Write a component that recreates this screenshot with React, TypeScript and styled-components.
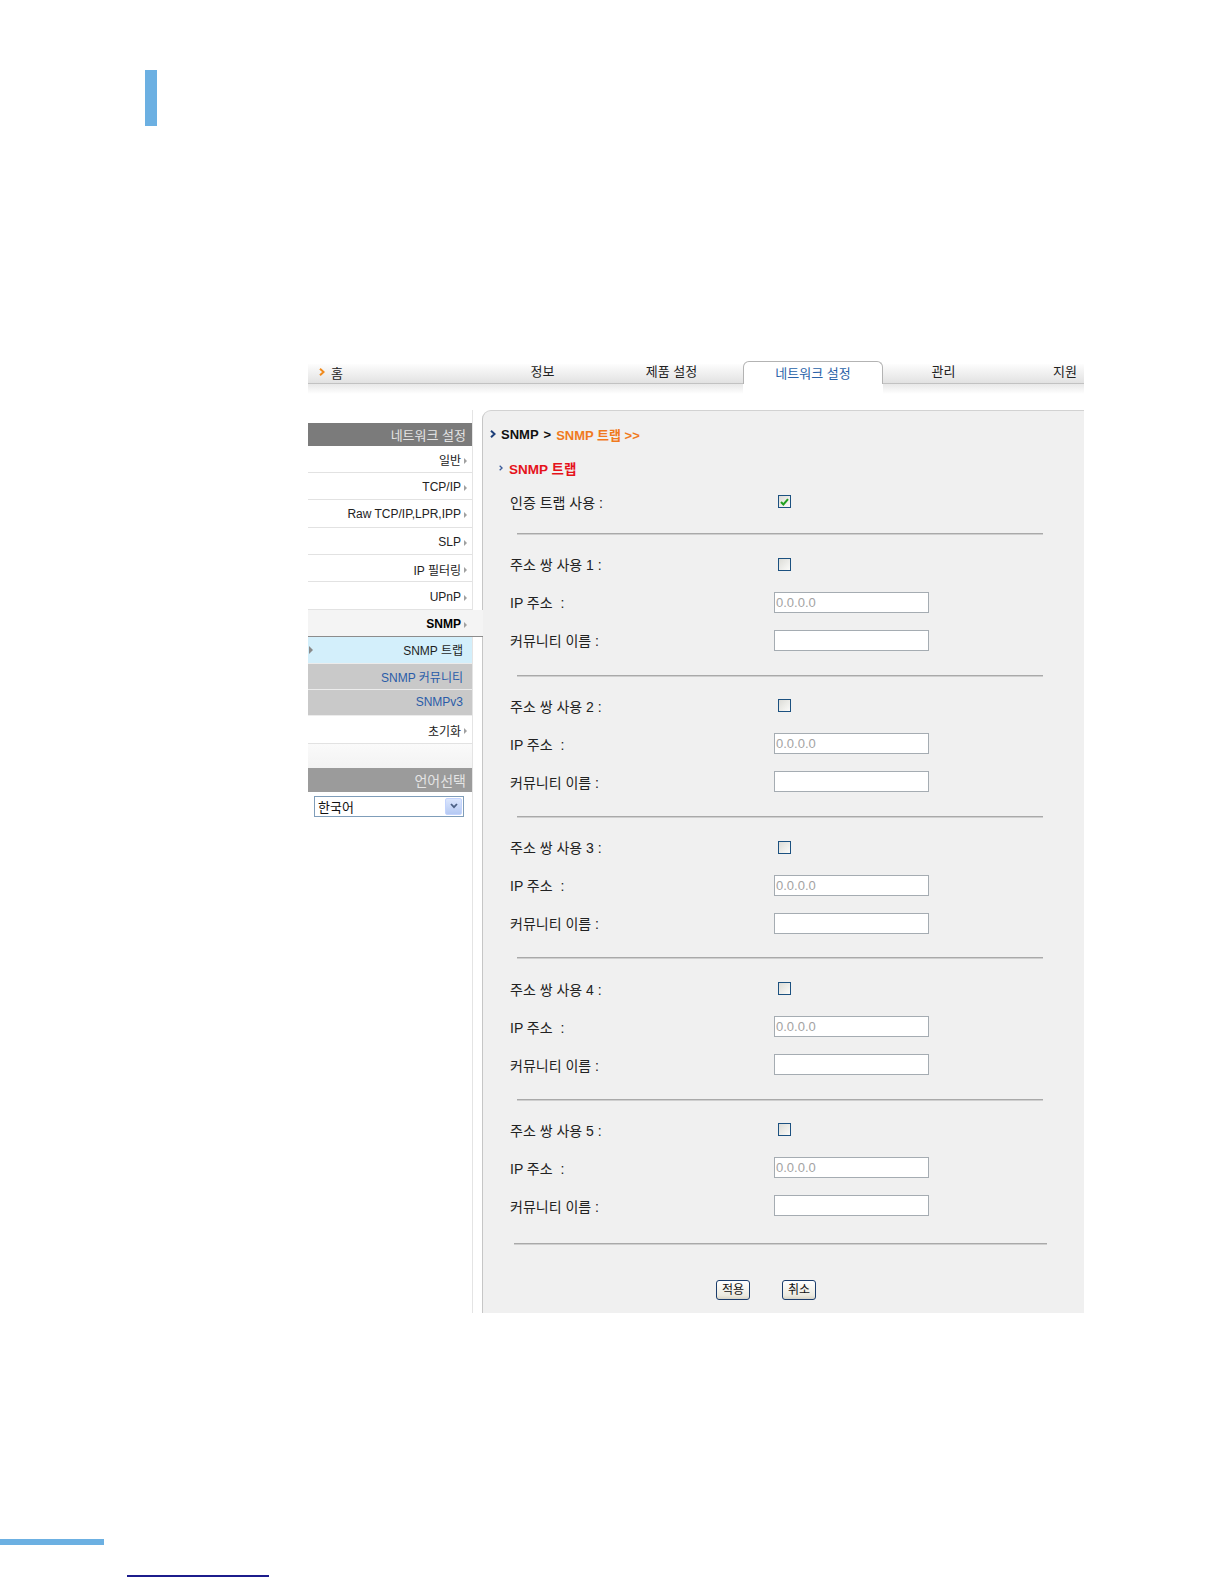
import React from "react";
import styled, { createGlobalStyle } from "styled-components";

const Global = createGlobalStyle`
  html, body { margin: 0; padding: 0; background: #fff; }
  body { font-family: "Liberation Sans", "Noto Sans CJK KR", sans-serif; color: #222; }
  * { box-sizing: border-box; }
`;

const Page = styled.div`
  width: 1224px;
  height: 1584px;
  display: flex;
  flex-direction: column;
  overflow: hidden;
  background: #fff;
`;

const Marker = styled.div`
  margin: 70px 0 0 145px;
  width: 12px;
  height: 56px;
  background: #6cb0e2;
`;

const Screen = styled.div`
  margin: 235px 0 0 308px;
  width: 776px;
  height: 952px;
  display: flex;
  flex-direction: column;
  overflow: hidden;
`;

const NavBar = styled.div`
  height: 33px;
  display: flex;
  align-items: flex-start;
  background: linear-gradient(
    to bottom,
    #fff 0px,
    #fff 3px,
    #fdfdfd 3px,
    #e2e2e2 22px,
    #c2c2c2 22px,
    #c2c2c2 23px,
    #e8e8e8 23px,
    #fff 33px
  );
  font-size: 13px;
  color: #222;
`;

const HomeLink = styled.div`
  width: 170px;
  height: 23px;
  padding: 0 0 1px 11px;
  display: flex;
  align-items: center;
  gap: 6px;
`;

const Tab = styled.div<{ $w: number; $end?: boolean }>`
  width: ${(p) => p.$w}px;
  height: 23px;
  padding-bottom: 4px;
  display: flex;
  align-items: center;
  justify-content: ${(p) => (p.$end ? "flex-end" : "center")};
  padding-right: ${(p) => (p.$end ? "7px" : "0")};
`;

const ActiveTab = styled.div`
  position: relative;
  margin-left: 7px;
  width: 140px;
  height: 23px;
  padding-bottom: 2px;
  display: flex;
  align-items: center;
  justify-content: center;
  background: #fff;
  border: 1px solid #b3b3b3;
  border-bottom: none;
  border-radius: 6px 6px 0 0;
  color: #2a62a8;
  &::after {
    content: "";
    position: absolute;
    left: -1px;
    right: -1px;
    top: 22px;
    height: 11px;
    background: #fff;
  }
`;

const Body = styled.div`
  margin-top: 16px;
  flex: 1;
  display: flex;
`;

const Sidebar = styled.div`
  width: 174px;
  padding-top: 13px;
  display: flex;
  flex-direction: column;
  background: linear-gradient(
    to right,
    transparent 164px,
    #e4e4e4 164px,
    #e4e4e4 165px,
    transparent 165px
  );
`;

const SideHeader = styled.div<{ $lang?: boolean }>`
  width: 164px;
  height: ${(p) => (p.$lang ? 24 : 22.5)}px;
  background: ${(p) => (p.$lang ? "#9b9b9b" : "#7b7b7b")};
  color: #e4e4e4;
  font-size: ${(p) => (p.$lang ? 14 : 13)}px;
  display: flex;
  align-items: center;
  justify-content: flex-end;
  padding-right: 6px;
`;

const SideItem = styled.div<{ $active?: boolean }>`
  width: ${(p) => (p.$active ? 175 : 164)}px;
  height: 27.4px;
  position: ${(p) => (p.$active ? "relative" : "static")};
  z-index: ${(p) => (p.$active ? 2 : 0)};
  display: flex;
  align-items: center;
  justify-content: flex-end;
  padding-top: 2px;
  padding-right: ${(p) => (p.$active ? 16 : 5)}px;
  font-size: 12px;
  font-weight: ${(p) => (p.$active ? 700 : 400)};
  color: ${(p) => (p.$active ? "#000" : "#222")};
  background: ${(p) => (p.$active ? "#f4f4f4" : "#fff")};
  border-bottom: 1px solid ${(p) => (p.$active ? "#8c8c8c" : "#e2e2e2")};
`;

const ItemArrow = styled.span`
  width: 0;
  height: 0;
  margin-left: 3px;
  margin-top: 2px;
  border-left: 3px solid #a0a0a0;
  border-top: 3px solid transparent;
  border-bottom: 3px solid transparent;
`;

const SubItem = styled.div<{ $current?: boolean }>`
  width: 164px;
  height: 26.3px;
  display: flex;
  align-items: center;
  justify-content: space-between;
  padding: 0 9px 0 1px;
  font-size: 12px;
  color: ${(p) => (p.$current ? "#1e1e1e" : "#2a5ca8")};
  background: ${(p) => (p.$current ? "#d3effb" : "#c9c9c9")};
  border-bottom: 1px solid #ececec;
`;

const SubMark = styled.span<{ $show?: boolean }>`
  width: 0;
  height: 0;
  border-left: 4px solid ${(p) => (p.$show ? "#8a8a8a" : "transparent")};
  border-top: 4px solid transparent;
  border-bottom: 4px solid transparent;
`;

const SideGap = styled.div`
  width: 164px;
  height: 24px;
  background: linear-gradient(to bottom, #fafafa, #f3f3f3);
`;

const LangWrap = styled.div`
  width: 164px;
  padding: 4px 0 0 6px;
`;

const LangSelect = styled.div`
  width: 150px;
  height: 21px;
  border: 1px solid #7f9db9;
  background: #fff;
  display: flex;
  align-items: stretch;
  font-size: 13px;
  color: #111;
`;

const LangValue = styled.div`
  flex: 1;
  display: flex;
  align-items: center;
  padding-left: 3px;
`;

const LangButton = styled.div`
  width: 17px;
  margin: 1px;
  border-radius: 2px;
  background: linear-gradient(to bottom, #dbe6fd, #b5c9f3);
  border: 1px solid #c3d3fd;
  display: flex;
  align-items: center;
  justify-content: center;
`;

const Panel = styled.div`
  flex: 1;
  background: #f0f0f0;
  border-top: 1px solid #d2d2d2;
  border-left: 1px solid #c6c6c6;
  border-top-left-radius: 9px;
  display: flex;
  flex-direction: column;
  align-items: flex-start;
`;

const Breadcrumb = styled.div`
  margin: 15.3px 0 0 7px;
  height: 16px;
  display: flex;
  align-items: center;
  gap: 5px;
  font-size: 13px;
  font-weight: 700;
  color: #111;
`;

const Orange = styled.span`
  color: #f07a1e;
`;

const SectionTitle = styled.div`
  margin: 17.4px 0 0 16px;
  height: 16px;
  display: flex;
  align-items: center;
  gap: 6px;
  font-size: 13.5px;
  font-weight: 700;
  color: #e5131b;
`;

const Form = styled.div`
  margin-left: 27px;
  display: flex;
  flex-direction: column;
`;

const Row = styled.div<{ $first?: boolean }>`
  display: grid;
  grid-template-columns: 264px 160px;
  height: 38px;
  align-items: center;
  margin-top: ${(p) => (p.$first ? 7.3 : 0)}px;
  font-size: 14px;
  color: #222;
`;

const Divider = styled.div<{ $last?: boolean }>`
  margin-top: ${(p) => (p.$last ? 18 : 12.3)}px;
  margin-left: ${(p) => (p.$last ? 4 : 7)}px;
  width: ${(p) => (p.$last ? 533 : 526)}px;
  height: 2px;
  border-top: 1px solid #a9a9a9;
  border-bottom: 1px solid #cfcfcf;
`;

const GroupDivider = styled(Divider)`
  margin-top: 15.2px;
`;

const Group = styled.div`
  margin-top: 10.2px;
  display: flex;
  flex-direction: column;
`;

const Check = styled.span`
  margin-left: 4px;
  width: 13px;
  height: 13px;
  border: 1px solid #1c5180;
  background: linear-gradient(135deg, #dcdcd7, #fbfbf9);
  display: flex;
  align-items: center;
  justify-content: center;
`;

const TextField = styled.input`
  width: 155px;
  height: 21px;
  border: 1px solid #a5acb2;
  background: #fff;
  font-family: "Liberation Sans", "Noto Sans CJK KR", sans-serif;
  font-size: 13px;
  color: #a3a3a3;
  padding: 0 1px;
  outline: none;
`;

const Buttons = styled.div`
  margin: 34.6px 0 0 206px;
  display: flex;
  gap: 32px;
`;

const XpButton = styled.button`
  width: 34px;
  height: 20px;
  padding: 0;
  border: 1px solid #1b3d6c;
  border-radius: 3px;
  background: linear-gradient(to bottom, #ffffff, #eceae0 80%, #d8d5c8);
  font-family: "Liberation Sans", "Noto Sans CJK KR", sans-serif;
  font-size: 12px;
  color: #111;
  line-height: 16px;
`;

const Footer = styled.div`
  display: flex;
  flex-direction: column;
  margin-top: 226px;
`;

const FooterBar = styled.div`
  width: 104px;
  height: 6px;
  background: #6cb0e2;
`;

const FooterLine = styled.div`
  margin: 30px 0 0 127px;
  width: 142px;
  height: 2px;
  background: #1c1c8c;
`;

const Chevron = ({ color, w = 6, h = 8 }: { color: string; w?: number; h?: number }) => (
  <svg width={w} height={h} viewBox="0 0 6 8">
    <path d="M1 0.8 L4.6 4 L1 7.2" fill="none" stroke={color} strokeWidth="2" />
  </svg>
);

const CheckMark = () => (
  <svg width="9" height="8" viewBox="0 0 9 8">
    <path d="M1 4 L3.4 6.5 L8 1.2" fill="none" stroke="#21a121" strokeWidth="2" />
  </svg>
);

const sideItems = ["일반", "TCP/IP", "Raw TCP/IP,LPR,IPP", "SLP", "IP 필터링", "UPnP"];

const groups = [1, 2, 3, 4, 5];

export default function App() {
  return (
    <Page>
      <Global />
      <Marker />
      <Screen>
        <NavBar>
          <HomeLink>
            <Chevron color="#f08a1c" />
            <span>홈</span>
          </HomeLink>
          <Tab $w={129}>정보</Tab>
          <Tab $w={129}>제품 설정</Tab>
          <ActiveTab>네트워크 설정</ActiveTab>
          <Tab $w={121}>관리</Tab>
          <Tab $w={80} $end>
            지원
          </Tab>
        </NavBar>
        <Body>
          <Sidebar>
            <SideHeader>네트워크 설정</SideHeader>
            {sideItems.map((t) => (
              <SideItem key={t}>
                {t}
                <ItemArrow />
              </SideItem>
            ))}
            <SideItem $active>
              SNMP
              <ItemArrow />
            </SideItem>
            <SubItem $current>
              <SubMark $show />
              SNMP 트랩
            </SubItem>
            <SubItem>
              <SubMark />
              SNMP 커뮤니티
            </SubItem>
            <SubItem>
              <SubMark />
              SNMPv3
            </SubItem>
            <SideItem>
              초기화
              <ItemArrow />
            </SideItem>
            <SideGap />
            <SideHeader $lang>언어선택</SideHeader>
            <LangWrap>
              <LangSelect>
                <LangValue>한국어</LangValue>
                <LangButton>
                  <svg width="8" height="6" viewBox="0 0 8 6">
                    <path d="M1 1 L4 4.2 L7 1" fill="none" stroke="#4d6185" strokeWidth="1.8" />
                  </svg>
                </LangButton>
              </LangSelect>
            </LangWrap>
          </Sidebar>
          <Panel>
            <Breadcrumb>
              <Chevron color="#1d3f7a" />
              <span>SNMP</span>
              <span>&gt;</span>
              <Orange>SNMP 트랩 &gt;&gt;</Orange>
            </Breadcrumb>
            <SectionTitle>
              <Chevron color="#3a5a9a" w={4} h={6} />
              SNMP 트랩
            </SectionTitle>
            <Form>
              <Row $first>
                <span>인증 트랩 사용 :</span>
                <Check>
                  <CheckMark />
                </Check>
              </Row>
              <Divider />
              {groups.map((n) => (
                <React.Fragment key={n}>
                  <Group>
                    <Row>
                      <span>주소 쌍 사용 {n} :</span>
                      <Check />
                    </Row>
                    <Row>
                      <span>IP 주소&nbsp; :</span>
                      <TextField defaultValue="0.0.0.0" />
                    </Row>
                    <Row>
                      <span>커뮤니티 이름 :</span>
                      <TextField defaultValue="" />
                    </Row>
                  </Group>
                  {n < 5 ? <GroupDivider /> : <Divider $last />}
                </React.Fragment>
              ))}
              <Buttons>
                <XpButton>적용</XpButton>
                <XpButton>취소</XpButton>
              </Buttons>
            </Form>
          </Panel>
        </Body>
      </Screen>
      <Footer>
        <FooterBar />
        <FooterLine />
      </Footer>
    </Page>
  );
}
